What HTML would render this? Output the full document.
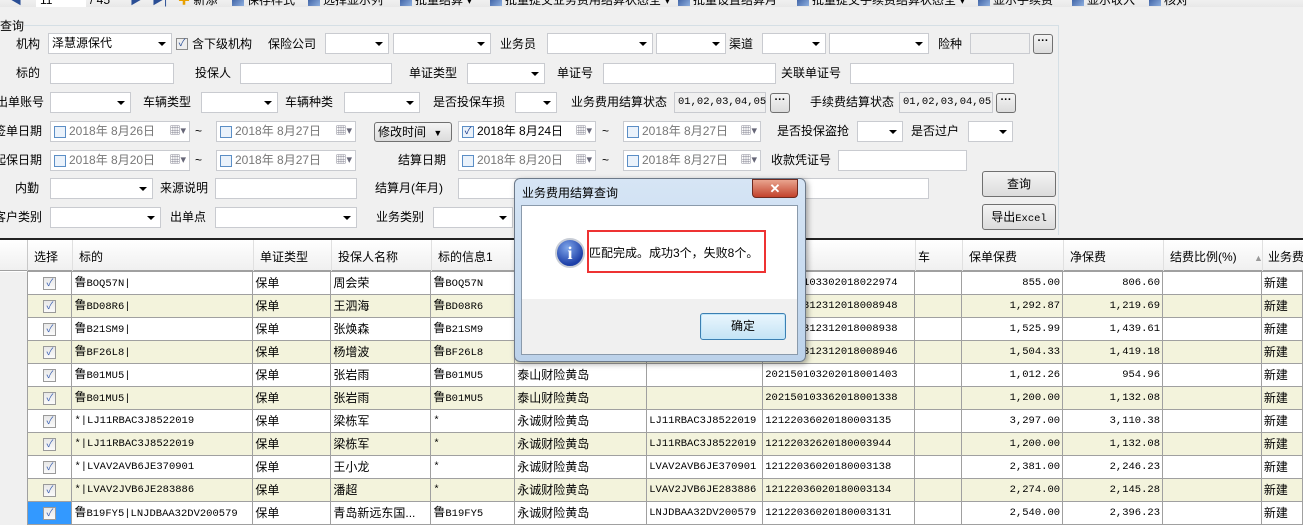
<!DOCTYPE html>
<html><head><meta charset="utf-8">
<style>
*{box-sizing:border-box;margin:0;padding:0}
body{width:1303px;height:520px;overflow:hidden;background:#f0f0f0;font:12px "Liberation Sans","WenQuanYi Zen Hei","Noto Sans CJK SC",sans-serif;color:#000;position:relative}
.a{position:absolute;white-space:nowrap}
.l{position:absolute;white-space:nowrap;line-height:20px}
.b{position:absolute;background:#fff;border:1px solid #c9cbd0;height:21px;line-height:19px;padding-left:3px}
.cb:after{content:"";position:absolute;right:5px;top:8px;border:4px solid transparent;border-top:4px solid #000;border-bottom:0}
.dis{background:#f0f0f0}
.btn{position:absolute;border:1px solid #707070;border-radius:3px;background:linear-gradient(#f4f4f4,#dcdcdc);text-align:center}
.dots{width:20px;height:20px;line-height:12px;font-weight:bold;font-size:11px}
.dt{position:absolute;background:#fff;border:1px solid #c9cbd0;height:21px;line-height:19px;padding-left:18px;color:#777}
.dt:before{content:"";position:absolute;left:3px;top:4px;width:10px;height:10px;border:1px solid #5b8ec6;background:#eaf2fb}
.dt:after{content:"▦▾";position:absolute;right:3px;top:0;color:#667;font-size:11px}
.dt.ck{color:#000}
.dt.ck:before{content:"✓";font-size:10px;line-height:10px;color:#1a3a8a;text-align:center}
.tb{position:absolute;top:-7px;left:0;width:1303px;height:14px;background:linear-gradient(#f7f7f7,#e8e8e8)}
.tb span{position:absolute;top:0;white-space:nowrap;line-height:14px}
.ic{display:inline-block;width:12px;height:12px;background:linear-gradient(135deg,#2a4e95,#8fb0e0);margin-right:3px;vertical-align:-2px}
table{position:absolute;left:0;top:271px;border-collapse:collapse;table-layout:fixed;background:#fff}
tr{height:23px}
td{border:1px solid #a0a0a0;height:23px;padding:0 2px;white-space:nowrap;overflow:hidden;line-height:15px;vertical-align:middle}
td span{line-height:15px}
tr:nth-child(even) td{background:#f3f3dc}
td:first-child{background:#f0f0f0!important;border:0;border-right:1px solid #a0a0a0}
td.c{text-align:center}
td.r{text-align:right}
.chk{display:inline-block;width:13px;height:13px;border:1px solid #9a9a9a;background:linear-gradient(#e8e8e8,#fafafa);font-size:10px;line-height:11px!important;color:#3a5fb0;text-align:center;vertical-align:middle}
.m{font-family:"Liberation Mono","WenQuanYi Zen Hei",monospace;font-size:10.5px}
</style></head><body>
<div class="tb">
<span style="left:10px;color:#2a4e95">◀</span>
<span style="left:36px;background:#fff;width:50px;padding-left:4px">11</span>
<span style="left:90px">/ 45</span>
<span style="left:130px;color:#2a4e95">▶</span><span style="left:152px;color:#2a4e95">▶|</span>
<span style="left:178px"><b style="color:#e8a000">✚</b> 新添</span>
<span style="left:232px"><i class="ic"></i>保存样式</span>
<span style="left:308px"><i class="ic"></i>选择显示列</span>
<span style="left:400px"><i class="ic"></i>批量结算 ▾</span>
<span style="left:490px"><i class="ic"></i>批量提交业务费用结算状态全 ▾</span>
<span style="left:678px"><i class="ic"></i>批量设置结算月</span>
<span style="left:797px"><i class="ic"></i>批量提交手续费结算状态全 ▾</span>
<span style="left:978px"><i class="ic"></i>显示手续费</span>
<span style="left:1072px"><i class="ic"></i>显示收入</span>
<span style="left:1149px"><i class="ic"></i>核对</span>
</div>
<div class="a" style="left:0;top:17px">查询</div>
<div class="a" style="left:24px;top:25px;width:1035px;height:210px;border-top:1px solid #d5dfe5;border-right:1px solid #d5dfe5"></div>

<div class="l" style="left:16px;top:34px">机构</div>
<div class="b cb" style="left:48px;top:33px;width:124px">泽慧源保代</div>
<div class="a" style="left:176px;top:38px;width:12px;height:12px;border:1px solid #8a8a8a;background:#eee;font-size:10px;line-height:10px;color:#2a4e95;text-align:center">✓</div>
<div class="l" style="left:192px;top:34px">含下级机构</div>
<div class="l" style="left:268px;top:34px">保险公司</div>
<div class="b cb" style="left:325px;top:33px;width:64px"></div>
<div class="b cb" style="left:393px;top:33px;width:98px"></div>
<div class="l" style="left:500px;top:34px">业务员</div>
<div class="b cb" style="left:547px;top:33px;width:106px"></div>
<div class="b cb" style="left:656px;top:33px;width:70px"></div>
<div class="l" style="left:729px;top:34px">渠道</div>
<div class="b cb" style="left:762px;top:33px;width:64px"></div>
<div class="b cb" style="left:829px;top:33px;width:100px"></div>
<div class="l" style="left:938px;top:34px">险种</div>
<div class="b dis" style="left:970px;top:33px;width:60px"></div>
<div class="btn dots" style="left:1033px;top:34px">···</div>

<div class="l" style="left:16px;top:63px">标的</div>
<div class="b" style="left:50px;top:63px;width:124px"></div>
<div class="l" style="left:195px;top:63px">投保人</div>
<div class="b" style="left:240px;top:63px;width:152px"></div>
<div class="l" style="left:409px;top:63px">单证类型</div>
<div class="b cb" style="left:467px;top:63px;width:78px"></div>
<div class="l" style="left:557px;top:63px">单证号</div>
<div class="b" style="left:603px;top:63px;width:173px"></div>
<div class="l" style="left:781px;top:63px">关联单证号</div>
<div class="b" style="left:850px;top:63px;width:164px"></div>

<div class="l" style="left:-4px;top:92px">出单账号</div>
<div class="b cb" style="left:50px;top:92px;width:81px"></div>
<div class="l" style="left:143px;top:92px">车辆类型</div>
<div class="b cb" style="left:201px;top:92px;width:77px"></div>
<div class="l" style="left:285px;top:92px">车辆种类</div>
<div class="b cb" style="left:344px;top:92px;width:76px"></div>
<div class="l" style="left:433px;top:92px">是否投保车损</div>
<div class="b cb" style="left:515px;top:92px;width:42px"></div>
<div class="l" style="left:571px;top:92px">业务费用结算状态</div>
<div class="b dis m" style="left:674px;top:92px;width:92px">01,02,03,04,05</div>
<div class="btn dots" style="left:770px;top:93px">···</div>
<div class="l" style="left:810px;top:92px">手续费结算状态</div>
<div class="b dis m" style="left:899px;top:92px;width:94px">01,02,03,04,05</div>
<div class="btn dots" style="left:996px;top:93px">···</div>

<div class="l" style="left:-6px;top:121px">签单日期</div>
<div class="dt" style="left:50px;top:121px;width:140px">2018年 8月26日</div>
<div class="l" style="left:195px;top:121px">~</div>
<div class="dt" style="left:216px;top:121px;width:140px">2018年 8月27日</div>
<div class="btn" style="left:374px;top:122px;width:78px;height:20px;line-height:18px;text-align:left;padding-left:3px">修改时间 <span style="font-size:9px;margin-left:4px">▼</span></div>
<div class="dt ck" style="left:458px;top:121px;width:138px">2018年 8月24日</div>
<div class="l" style="left:602px;top:121px">~</div>
<div class="dt" style="left:623px;top:121px;width:138px">2018年 8月27日</div>
<div class="l" style="left:777px;top:121px">是否投保盗抢</div>
<div class="b cb" style="left:857px;top:121px;width:46px"></div>
<div class="l" style="left:911px;top:121px">是否过户</div>
<div class="b cb" style="left:968px;top:121px;width:45px"></div>

<div class="l" style="left:-6px;top:150px">起保日期</div>
<div class="dt" style="left:50px;top:150px;width:140px">2018年 8月20日</div>
<div class="l" style="left:195px;top:150px">~</div>
<div class="dt" style="left:216px;top:150px;width:140px">2018年 8月27日</div>
<div class="l" style="left:398px;top:150px">结算日期</div>
<div class="dt" style="left:458px;top:150px;width:138px">2018年 8月20日</div>
<div class="l" style="left:602px;top:150px">~</div>
<div class="dt" style="left:623px;top:150px;width:138px">2018年 8月27日</div>
<div class="l" style="left:771px;top:150px">收款凭证号</div>
<div class="b" style="left:838px;top:150px;width:129px"></div>

<div class="l" style="left:15px;top:178px">内勤</div>
<div class="b cb" style="left:50px;top:178px;width:103px"></div>
<div class="l" style="left:160px;top:178px">来源说明</div>
<div class="b" style="left:215px;top:178px;width:142px"></div>
<div class="l" style="left:375px;top:178px">结算月(年月)</div>
<div class="b" style="left:458px;top:178px;width:60px"></div>
<div class="b" style="left:800px;top:178px;width:129px"></div>
<div class="btn" style="left:982px;top:171px;width:74px;height:26px;line-height:24px">查询</div>

<div class="l" style="left:-6px;top:207px">客户类别</div>
<div class="b cb" style="left:50px;top:207px;width:111px"></div>
<div class="l" style="left:170px;top:207px">出单点</div>
<div class="b cb" style="left:215px;top:207px;width:142px"></div>
<div class="l" style="left:376px;top:207px">业务类别</div>
<div class="b cb" style="left:433px;top:207px;width:80px"></div>
<div class="btn" style="left:982px;top:204px;width:74px;height:26px;line-height:24px">导出<span class="m">Excel</span></div>

<div class="a" style="left:0;top:238px;width:1303px;height:2px;background:#222"></div>
<div class="a" style="left:0;top:240px;width:1303px;height:31px;background:linear-gradient(#fff,#f0f0f0);border-bottom:1px solid #a0a0a0"></div>
<div class="a" style="left:27px;top:240px;height:31px;border-left:1px solid #c8c8c8"></div>
<div class="a" style="left:34px;top:248px">选择</div>
<div class="a" style="left:72px;top:240px;height:31px;border-left:1px solid #e0e0e0;padding:8px 6px">标的</div>
<div class="a" style="left:253px;top:240px;height:31px;border-left:1px solid #e0e0e0;padding:8px 6px">单证类型</div>
<div class="a" style="left:331px;top:240px;height:31px;border-left:1px solid #e0e0e0;padding:8px 6px">投保人名称</div>
<div class="a" style="left:431px;top:240px;height:31px;border-left:1px solid #e0e0e0;padding:8px 6px">标的信息1</div>
<div class="a" style="left:763px;top:240px;height:31px;border-left:1px solid #e0e0e0;padding:8px 6px">单证号</div>
<div class="a" style="left:915px;top:240px;height:31px;border-left:1px solid #e0e0e0;padding:8px 2px">车</div>
<div class="a" style="left:962px;top:240px;height:31px;border-left:1px solid #e0e0e0;padding:8px 6px">保单保费</div>
<div class="a" style="left:1063px;top:240px;height:31px;border-left:1px solid #e0e0e0;padding:8px 6px">净保费</div>
<div class="a" style="left:1163px;top:240px;height:31px;border-left:1px solid #e0e0e0;padding:8px 6px">结费比例(%) <span style="color:#999;font-size:9px;margin-left:14px">▲</span></div>
<div class="a" style="left:1262px;top:240px;height:31px;border-left:1px solid #e0e0e0;padding:8px 5px">业务费</div>

<table>
<colgroup><col style="width:28px"><col style="width:44px"><col style="width:181px"><col style="width:78px"><col style="width:100px"><col style="width:84px"><col style="width:132px"><col style="width:116px"><col style="width:152px"><col style="width:47px"><col style="width:101px"><col style="width:100px"><col style="width:99px"><col style="width:41px"></colgroup>
<tr><td></td><td class="c"><span class="chk">✓</span></td><td>鲁<span class="m">BOQ57N|</span></td><td>保单</td><td>周会荣</td><td>鲁<span class="m">BOQ57N</span></td><td></td><td></td><td class="m">202150103302018022974</td><td></td><td class="r m">855.00</td><td class="r m">806.60</td><td></td><td>新建</td></tr>
<tr><td></td><td class="c"><span class="chk">✓</span></td><td>鲁<span class="m">BD08R6|</span></td><td>保单</td><td>王泗海</td><td>鲁<span class="m">BD08R6</span></td><td></td><td></td><td class="m">121220312312018008948</td><td></td><td class="r m">1,292.87</td><td class="r m">1,219.69</td><td></td><td>新建</td></tr>
<tr><td></td><td class="c"><span class="chk">✓</span></td><td>鲁<span class="m">B21SM9|</span></td><td>保单</td><td>张焕森</td><td>鲁<span class="m">B21SM9</span></td><td></td><td></td><td class="m">121220312312018008938</td><td></td><td class="r m">1,525.99</td><td class="r m">1,439.61</td><td></td><td>新建</td></tr>
<tr><td></td><td class="c"><span class="chk">✓</span></td><td>鲁<span class="m">BF26L8|</span></td><td>保单</td><td>杨增波</td><td>鲁<span class="m">BF26L8</span></td><td></td><td></td><td class="m">121220312312018008946</td><td></td><td class="r m">1,504.33</td><td class="r m">1,419.18</td><td></td><td>新建</td></tr>
<tr><td></td><td class="c"><span class="chk">✓</span></td><td>鲁<span class="m">B01MU5|</span></td><td>保单</td><td>张岩雨</td><td>鲁<span class="m">B01MU5</span></td><td>泰山财险黄岛</td><td></td><td class="m">202150103202018001403</td><td></td><td class="r m">1,012.26</td><td class="r m">954.96</td><td></td><td>新建</td></tr>
<tr><td></td><td class="c"><span class="chk">✓</span></td><td>鲁<span class="m">B01MU5|</span></td><td>保单</td><td>张岩雨</td><td>鲁<span class="m">B01MU5</span></td><td>泰山财险黄岛</td><td></td><td class="m">202150103362018001338</td><td></td><td class="r m">1,200.00</td><td class="r m">1,132.08</td><td></td><td>新建</td></tr>
<tr><td></td><td class="c"><span class="chk">✓</span></td><td class="m">*|LJ11RBAC3J8522019</td><td>保单</td><td>梁栋军</td><td class="m">*</td><td>永诚财险黄岛</td><td class="m">LJ11RBAC3J8522019</td><td class="m">12122036020180003135</td><td></td><td class="r m">3,297.00</td><td class="r m">3,110.38</td><td></td><td>新建</td></tr>
<tr><td></td><td class="c"><span class="chk">✓</span></td><td class="m">*|LJ11RBAC3J8522019</td><td>保单</td><td>梁栋军</td><td class="m">*</td><td>永诚财险黄岛</td><td class="m">LJ11RBAC3J8522019</td><td class="m">12122032620180003944</td><td></td><td class="r m">1,200.00</td><td class="r m">1,132.08</td><td></td><td>新建</td></tr>
<tr><td></td><td class="c"><span class="chk">✓</span></td><td class="m">*|LVAV2AVB6JE370901</td><td>保单</td><td>王小龙</td><td class="m">*</td><td>永诚财险黄岛</td><td class="m">LVAV2AVB6JE370901</td><td class="m">12122036020180003138</td><td></td><td class="r m">2,381.00</td><td class="r m">2,246.23</td><td></td><td>新建</td></tr>
<tr><td></td><td class="c"><span class="chk">✓</span></td><td class="m">*|LVAV2JVB6JE283886</td><td>保单</td><td>潘超</td><td class="m">*</td><td>永诚财险黄岛</td><td class="m">LVAV2JVB6JE283886</td><td class="m">12122036020180003134</td><td></td><td class="r m">2,274.00</td><td class="r m">2,145.28</td><td></td><td>新建</td></tr>
<tr><td></td><td class="c" style="background:#3399ff"><span class="chk">✓</span></td><td>鲁<span class="m">B19FY5|LNJDBAA32DV200579</span></td><td>保单</td><td>青岛新远东国...</td><td>鲁<span class="m">B19FY5</span></td><td>永诚财险黄岛</td><td class="m">LNJDBAA32DV200579</td><td class="m">12122036020180003131</td><td></td><td class="r m">2,540.00</td><td class="r m">2,396.23</td><td></td><td>新建</td></tr>
</table>

<div class="a" style="left:514px;top:178px;width:292px;height:184px;border:1px solid #6d7a8a;border-radius:6px;background:linear-gradient(#d6e5f5,#bcd2ea);box-shadow:2px 2px 6px rgba(0,0,0,.35)"></div>
<div class="a" style="left:522px;top:184px">业务费用结算查询</div>
<div class="a" style="left:752px;top:179px;width:46px;height:19px;border:1px solid #6e2a20;border-radius:0 0 4px 4px;background:linear-gradient(#e9a48f,#c2422b);color:#fff;font-weight:bold;text-align:center;line-height:17px;font-size:13px">✕</div>
<div class="a" style="left:521px;top:205px;width:277px;height:150px;border:1px solid #8a9aab;background:#f0f0f0"></div>
<div class="a" style="left:522px;top:206px;width:275px;height:93px;background:#fff"></div>
<div class="a" style="left:555px;top:238px;width:30px;height:30px;border-radius:50%;background:radial-gradient(circle at 40% 30%,#7fa6ea,#1d3fa8 70%);border:2px solid #c8cdd6;color:#fff;text-align:center;font:bold 18px/26px 'Liberation Serif',serif">i</div>
<div class="a" style="left:587px;top:230px;width:179px;height:43px;border:2px solid #ee3333"></div>
<div class="a" style="left:589px;top:244px">匹配完成。成功3个，失败8个。</div>
<div class="a" style="left:700px;top:313px;width:86px;height:27px;border:1px solid #3c7fb1;border-radius:3px;background:linear-gradient(#eaf6fd,#c4e3f5);box-shadow:inset 0 0 0 1px #bfe6fb;text-align:center;line-height:25px">确定</div>
</body></html>
